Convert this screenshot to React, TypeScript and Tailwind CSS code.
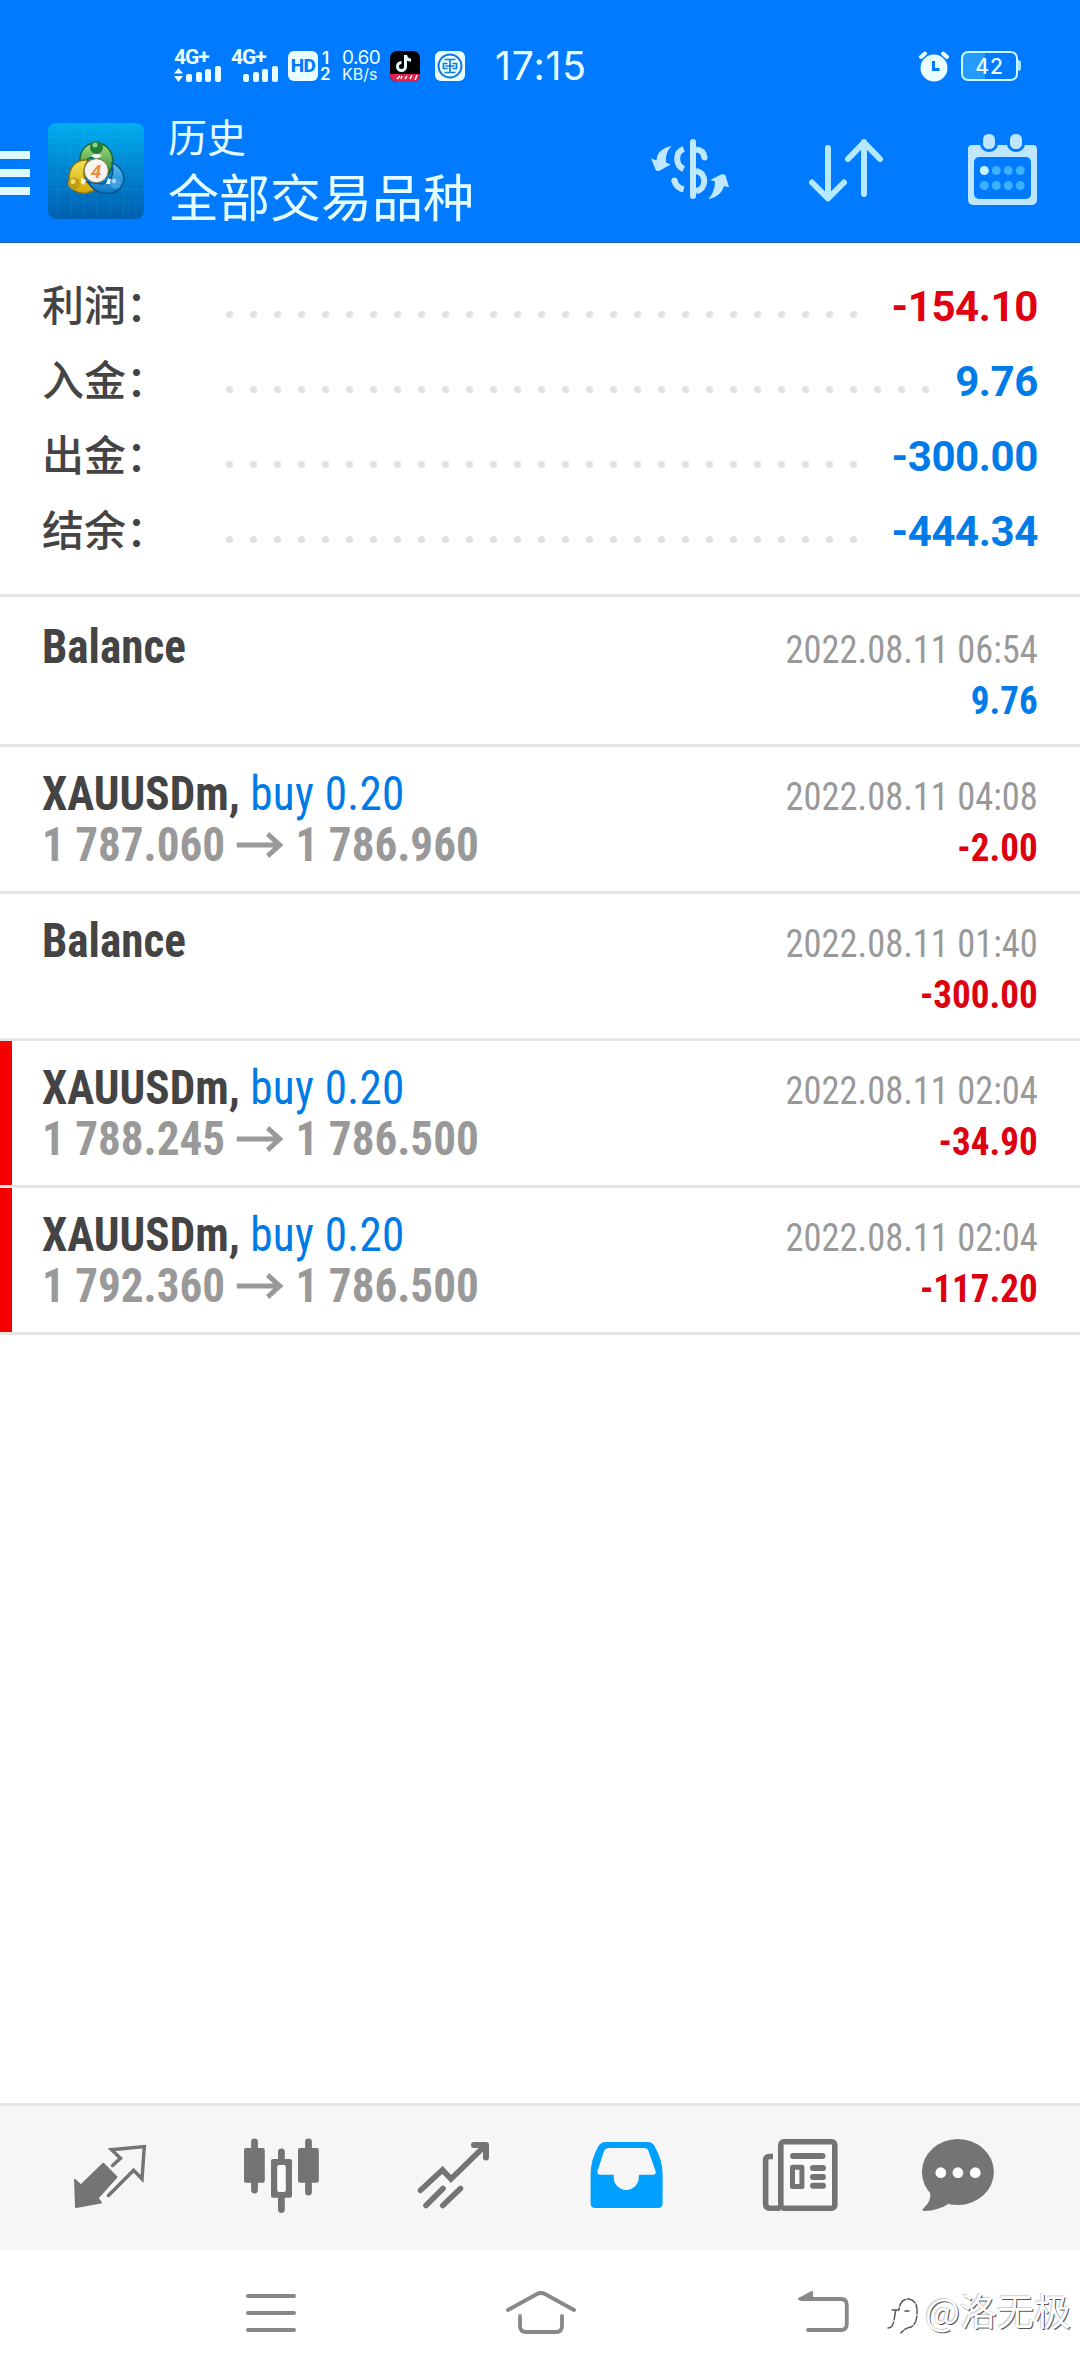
import type { ReactNode } from 'react'
import { clsx } from 'clsx'

interface SummaryRow {
  label: string
  value: string
  dots: number
  loss?: boolean
}

interface Deal {
  symbol: string
  side?: string
  open?: string
  close?: string
  time: string
  profit: string
  loss?: boolean
  flagged?: boolean
}

const summary: SummaryRow[] = [
  { label: '利润', value: '-154.10', dots: 27, loss: true },
  { label: '入金', value: '9.76', dots: 30 },
  { label: '出金', value: '-300.00', dots: 27 },
  { label: '结余', value: '-444.34', dots: 27 },
]

const deals: Deal[] = [
  { symbol: 'Balance', time: '2022.08.11 06:54', profit: '9.76' },
  { symbol: 'XAUUSDm,', side: 'buy 0.20', open: '1 787.060', close: '1 786.960', time: '2022.08.11 04:08', profit: '-2.00', loss: true },
  { symbol: 'Balance', time: '2022.08.11 01:40', profit: '-300.00', loss: true },
  { symbol: 'XAUUSDm,', side: 'buy 0.20', open: '1 788.245', close: '1 786.500', time: '2022.08.11 02:04', profit: '-34.90', loss: true, flagged: true },
  { symbol: 'XAUUSDm,', side: 'buy 0.20', open: '1 792.360', close: '1 786.500', time: '2022.08.11 02:04', profit: '-117.20', loss: true, flagged: true },
]

function Signal({ arrows }: { arrows?: boolean }) {
  return (
    <div className="w-[57px]">
      <div className="h-[18px] font-['Roboto',sans-serif] text-[21px] leading-[18px] font-bold tracking-[-1px] whitespace-nowrap">4G+</div>
      <svg className="block" width="50" height="17" viewBox="0 0 50 17" fill="#eaffff">
        {arrows && <path d="M4.5 2L9 7.5H0zM4.5 16L0 10H9z" />}
        <rect x="12" y="8" width="6" height="8" rx="2" />
        <rect x="22" y="6" width="6" height="10" rx="2" />
        <rect x="31" y="3" width="6" height="13" rx="2" />
        <rect x="41" y="0" width="6" height="16" rx="2" />
      </svg>
    </div>
  )
}

function StatusBar() {
  return (
    <div className="flex h-[101px] items-start pt-[48px] pl-[174px] pr-[59px] font-['Inter','Roboto',sans-serif] text-[#eaffff]">
      <Signal arrows />
      <Signal />
      <div className="mt-[3px] flex h-[30px] w-[30px] items-center justify-center rounded-[6px] bg-[#eaffff] font-['Roboto',sans-serif] text-[19px] font-extrabold tracking-[-0.5px] text-[#007bff]">HD</div>
      <div className="mt-[2px] ml-[2px] w-[22px] text-[17px] leading-[16px] font-semibold">
        <div className="pl-[2px]">1</div>
        <div>2</div>
      </div>
      <div className="mt-[1px] w-[48px] text-[19px] leading-[17px] tracking-[-0.5px]">
        <div>0.60</div>
        <div className="text-[16px] tracking-normal">KB/s</div>
      </div>
      <svg className="mt-[3px]" width="30" height="31" viewBox="0 0 30 31">
        <rect width="30" height="31" rx="7" fill="#000" />
        <path d="M0 23H30V24a7 7 0 0 1-7 7H7a7 7 0 0 1-7-7z" fill="#e0224e" />
        <path d="M15.5 4v11.5a4 4 0 1 1-4-4M15.5 4c.5 3.5 2.5 5 5.5 5.2" fill="none" stroke="#eaffff" strokeWidth="3" />
        <path d="M7 28l3-3M11 28l1-3M15 28l2-3M20 28l2-4M25 29l2-5" stroke="#fff" strokeWidth="1.5" />
      </svg>
      <svg className="mt-[3px] ml-[15px]" width="30" height="30" viewBox="0 0 30 30" fill="none" stroke="#1478dc">
        <rect width="30" height="30" rx="6" fill="#eaffff" stroke="none" />
        <circle cx="15" cy="15" r="11.5" strokeWidth="2" />
        <path d="M9.5 8.500H20.500M9.500 21.500H20.500M15 8.500V21.500M12.500 12.500H8.500V17.500H12.500M17.500 12.500H21.500V17.500H17.500M10.500 15H19.500" strokeWidth="1.700" />
      </svg>
      <div className="ml-[30px] text-[39px] leading-[36px] tracking-[0.9px]">17:15</div>
      <svg className="mt-[3px] ml-auto" width="32" height="31" viewBox="0 0 32 31">
        <circle cx="16" cy="17" r="13.5" fill="#eaffff" />
        <path d="M3 6l4-3.5M29 6l-4-3.5" stroke="#eaffff" strokeWidth="4" strokeLinecap="round" />
        <path d="M15.5 10v8.5h6" fill="none" stroke="#007bff" strokeWidth="3" />
      </svg>
      <div className="mt-[3px] ml-[11px] flex h-[30px] w-[57px] items-center justify-center rounded-[7px] border-2 border-[#c9f7ff] bg-linear-to-r from-[#259bff] from-42% to-[#007bff] to-42% text-[21px] leading-none font-medium tracking-[1px]">42</div>
      <div className="mt-[12px] h-[11px] w-[3px] rounded-r-sm bg-[#9fe6ff]" />
    </div>
  )
}

function AppLogo() {
  return (
    <svg width="96" height="96" viewBox="0 0 96 96">
      <defs>
        <linearGradient id="tile" x1="0" y1="0" x2="0" y2="1">
          <stop offset="0" stopColor="#00aef0" />
          <stop offset="0.5" stopColor="#0083cf" />
          <stop offset="1" stopColor="#005fae" />
        </linearGradient>
        <linearGradient id="green" x1="0" y1="0" x2="0" y2="1">
          <stop offset="0" stopColor="#a8dc86" />
          <stop offset="1" stopColor="#2c8a2c" />
        </linearGradient>
        <linearGradient id="yellow" x1="0" y1="0" x2="0" y2="1">
          <stop offset="0" stopColor="#f5e35a" />
          <stop offset="1" stopColor="#d6a800" />
        </linearGradient>
        <linearGradient id="blue" x1="0" y1="0" x2="0" y2="1">
          <stop offset="0" stopColor="#5cc4f2" />
          <stop offset="1" stopColor="#0b74c4" />
        </linearGradient>
      </defs>
      <rect width="96" height="96" rx="8" fill="url(#tile)" />
      <path d="M10 0V96M23 0V96M36 0V96M49 0V96M62 0V96M75 0V96M88 0V96M0 14H96M0 27H96M0 40H96M0 53H96M0 66H96M0 79H96" stroke="#4cc3ff" strokeOpacity="0.12" />
      <path d="M32 39C31 28 38 20 48 20S66 28 65 43L60 51L55 40C50 33 42 33 37 38Z" fill="url(#green)" stroke="#14682a" strokeWidth="1.5" />
      <path d="M40 37C27 36 21 45 21 56S30 71 39 70L47 67L38 58C34 50 36 43 40 37Z" fill="url(#yellow)" stroke="#8c7411" strokeWidth="1.5" />
      <path d="M64 40C73 43 78 53 75 61S64 71 55 70C48 69 43 64 40 59L54 61C64 59 66 50 64 40Z" fill="url(#blue)" stroke="#0a5394" strokeWidth="1.5" />
      <path d="M43 33L48.500 36L54 33L51 31H46ZM33 55L38 57L36 62L33 60ZM58 61L60 55L64 57L62 61Z" fill="#e8f4f0" />
      <circle cx="48.5" cy="24.5" r="6.5" fill="#237d36" />
      <circle cx="47" cy="22" r="2.5" fill="#8fd08c" />
      <circle cx="26" cy="60.5" r="6" fill="#c29a14" />
      <circle cx="25" cy="58.5" r="2.5" fill="#f0d968" />
      <circle cx="67.5" cy="60" r="5.5" fill="#3f9fe0" />
      <circle cx="66" cy="58" r="2.2" fill="#a4dcfa" />
      <circle cx="48.3" cy="47.7" r="12" fill="#f7f3ee" stroke="#7a6a3a" strokeWidth="0.8" />
      <text x="48" y="54.5" textAnchor="middle" fontSize="19" fontWeight="700" fontStyle="italic" fill="#f08a3c" fontFamily="Roboto, sans-serif">4</text>
    </svg>
  )
}

function HeaderIcon({ children }: { children: ReactNode }) {
  return (
    <div className="flex w-[156px] justify-center">
      <svg width="96" height="96" viewBox="0 0 96 96" fill="none" strokeLinecap="round" strokeLinejoin="round">
        {children}
      </svg>
    </div>
  )
}

function Header() {
  return (
    <div className="flex h-[142px] items-start border-b border-[#1463b4] pt-[20px]">
      <div className="mt-[30px] flex flex-col gap-[10px]">
        <div className="h-2 w-[30px] bg-[#dffaff]" />
        <div className="h-2 w-[30px] bg-[#dffaff]" />
        <div className="h-2 w-[30px] bg-[#dffaff]" />
      </div>
      <div className="mt-[2px] ml-[18px]">
        <AppLogo />
      </div>
      <div className="mt-[-9px] ml-[24px] flex-1 font-['Noto_Sans_CJK_SC',sans-serif] whitespace-nowrap text-[#e6fdff]">
        <div className="text-[39px] leading-[46px]">历史</div>
        <div className="mt-[7px] text-[51px] leading-[60px]">全部交易品种</div>
      </div>
      <HeaderIcon>
        <g stroke="#bfe8ff" strokeWidth="6" strokeLinecap="butt">
          <path d="M51 21V75" strokeLinecap="round" />
          <path d="M41.700 28C33 31 33 44 41.700 48M54 28.500C59 29 62 32 62.300 36.500M54 50C65 52 65 68 54 70M41.700 68.500C36 67 33 63 32 58.500" />
        </g>
        <circle cx="62.5" cy="36.5" r="3" fill="#bfe8ff" />
        <circle cx="32.5" cy="59.5" r="3" fill="#bfe8ff" />
        <path d="M30 25C25 29 23.500 35 24 41.500L28.700 43.500L17 50Q14.500 50.500 13.500 48.500L9 37.300L14.500 39.500C15 31 21 26.500 30 25Z" fill="#bfe8ff" />
        <path d="M66.300 78C70.500 74 73 67 73 60.500L68.300 59L79 53.500Q82 52.500 83.500 54.500L87 66.300L82 65C80 72 74 77 66.300 78Z" fill="#bfe8ff" />
      </HeaderIcon>
      <HeaderIcon>
        <path d="M30 27V77M14 61.500L30 77.500L46 61.500M66 73V21M50 38L66 21.500L82 38" stroke="#b4e9ff" strokeWidth="6" />
      </HeaderIcon>
      <HeaderIcon>
        <path d="M18 24H79a4 4 0 0 1 4 4V79a5 5 0 0 1-5 5H19a5 5 0 0 1-5-5V28a4 4 0 0 1 4-4ZM25 36a5 5 0 0 0-5 5V73a5 5 0 0 0 5 5H72a5 5 0 0 0 5-5V41a5 5 0 0 0-5-5Z" fill="#bfe6ff" fillRule="evenodd" />
        <rect x="27.5" y="11.5" width="15" height="18" rx="7" fill="#bfe6ff" stroke="#007bff" strokeWidth="3" />
        <rect x="54.5" y="11.5" width="15" height="18" rx="7" fill="#bfe6ff" stroke="#007bff" strokeWidth="3" />
        {[49.5, 64.5].map((y) =>
          [30.3, 42.3, 54.3, 66.3].map((x) => (
            <circle key={`${x}-${y}`} cx={x} cy={y} r="4.5" fill={x < 40 && y < 60 ? '#c8f4ff' : '#3db0ff'} />
          )),
        )}
      </HeaderIcon>
    </div>
  )
}

function Summary() {
  return (
    <div className="h-[354px] border-b-[3px] border-[#e5e5e5] pt-[26px]">
      {summary.map((row) => (
        <div key={row.label} className="flex h-[75px] items-center pr-[42px] pl-[42px]">
          <div className="mb-2 w-[184px] font-['Noto_Sans_CJK_SC',sans-serif] text-[42px] leading-[60px] font-medium text-[#444]">{row.label}：</div>
          <div className="mt-[15px] flex gap-[17px]">
            {Array.from({ length: row.dots }, (_, i) => (
              <span key={i} className="size-[7px] rounded-full bg-[#e2e2e2]" />
            ))}
          </div>
          <div className={clsx("ml-auto font-['Roboto',sans-serif] text-[42px] leading-[60px] font-bold tracking-[-0.4px]", row.loss ? 'text-[#e0000f]' : 'text-[#007be8]')}>
            {row.value}
          </div>
        </div>
      ))}
    </div>
  )
}

function DealRow({ deal }: { deal: Deal }) {
  return (
    <div className="flex h-[147px] border-b-[3px] border-[#e5e5e5]">
      <div className={clsx('w-3 shrink-0', deal.flagged && 'bg-[#f60000]')} />
      <div className="flex flex-1 justify-between pt-[21px] pr-[42px] pl-[30px] font-['Roboto_Condensed','Roboto',sans-serif] whitespace-nowrap [font-stretch:75%]">
        <div className="origin-left scale-x-[0.94] text-[48px] leading-[51px]">
          <div>
            <span className="font-bold text-[#444]">{deal.symbol}</span>
            {deal.side && <span className="tracking-[0.3px] text-[#007be5]"> {deal.side}</span>}
          </div>
          {deal.open && (
            <div className="flex items-center font-bold text-[#999]">
              {deal.open}
              <svg className="mr-[13px] ml-[12px]" width="50" height="26" viewBox="0 0 50 26" fill="none" stroke="#999" strokeWidth="5">
                <path d="M0 13H46M33 2L46 13L33 24" />
              </svg>
              {deal.close}
            </div>
          )}
        </div>
        <div className="pt-[4px] text-right text-[39px] leading-[51px]">
          <div className="origin-right scale-x-[0.935] text-[#999]">{deal.time}</div>
          <div className={clsx('origin-right scale-x-[0.95] font-bold', deal.loss ? 'text-[#dc0010]' : 'text-[#007be8]')}>{deal.profit}</div>
        </div>
      </div>
    </div>
  )
}

function Tab({ children, className }: { children: ReactNode; className?: string }) {
  return (
    <div className="flex w-[172px] justify-center">
      <svg className={className} width="84" height="84" viewBox="0 0 84 84" fill="#747474" strokeLinecap="round" strokeLinejoin="round">
        {children}
      </svg>
    </div>
  )
}

function TabBar() {
  return (
    <div className="flex h-[147px] items-center border-t-[3px] border-[#e5e5e5] bg-[#f6f6f6] px-6">
      <Tab>
        <path d="M7 44L12.900 49.500L35.300 27.700L48.500 41L29.500 62L33 66.500L8 71Z" stroke="#747474" strokeWidth="2" />
        <path d="M44.600 29.500L52.500 22.300L43.500 13.700L76.300 10.600L74 43L65.600 34.300L40.500 59.500" fill="none" stroke="#747474" strokeWidth="3.500" strokeLinejoin="miter" />
      </Tab>
      <Tab>
        <path d="M14.500 6V54M68.500 6V56M41.400 16V73.500" stroke="#747474" strokeWidth="6.800" />
        <rect x="4" y="12" width="20.8" height="34.7" rx="2" />
        <rect x="58" y="12" width="20.8" height="34.7" rx="2" />
        <rect x="31" y="23" width="21" height="38.7" rx="2" />
        <rect x="37.2" y="29" width="8.6" height="27" rx="2" fill="#fff" />
      </Tab>
      <Tab>
        <g fill="none" stroke="#747474" strokeWidth="5.6">
          <path d="M8.500 54.300L30.500 34L39 43L73 9.700" strokeLinejoin="miter" />
          <path d="M62 9H74V21.500" strokeWidth="6" />
          <path d="M14 69.500L31 52.500M30.800 69.500L48.500 52.500" />
        </g>
      </Tab>
      <Tab>
        <path d="M22 6H64Q68 6 70.500 10Q78.600 24 78.600 38V67Q78.600 72 74 72H11Q6.600 72 6.600 67V38Q6.600 24 14.500 10Q17 6 22 6ZM25 12Q21.500 12 20 15L13.500 35Q13 38.700 16 38.700H29.700V41.500A12.500 12.500 0 0 0 54.800 41.500V38.700H69Q72.500 38.700 71.500 35L64.500 15Q63.500 12 60 12Z" fill="#00a0ff" fillRule="evenodd" />
      </Tab>
      <Tab>
        <g fill="none" stroke="#747474" strokeWidth="5.6">
          <rect x="24.8" y="5.8" width="54" height="66.4" rx="3" fill="#fafafa" />
          <path d="M17 20.500H13.500Q9.600 20.500 9.600 24.500V68Q9.600 72.200 14 72.200H24" strokeLinecap="butt" />
          <path d="M37 20H66.500M57 32H67M57 41H67M57 49.700H67" strokeWidth="6" />
          <rect x="36.5" y="31.2" width="9.4" height="19.2" strokeWidth="5" />
        </g>
      </Tab>
      <Tab className="-ml-6">
        <ellipse cx="41.9" cy="36" rx="36" ry="33" />
        <path d="M13.500 54Q17 64 7 73Q5.500 74.800 8.500 75Q22 74.500 32.400 68Z" />
        <circle cx="24.8" cy="36.7" r="5.4" fill="#fff" />
        <circle cx="41.9" cy="36.7" r="5.4" fill="#fff" />
        <circle cx="59.3" cy="36.7" r="5.4" fill="#fff" />
      </Tab>
    </div>
  )
}

function SystemNav() {
  return (
    <div className="relative flex h-[126px] gap-[170px] pl-[221px]">
      <svg width="100" height="126" viewBox="0 0 100 126" stroke="#888" strokeWidth="4" strokeLinecap="round">
        <path d="M27 46H73M27 63H73M27 80H73" />
      </svg>
      <svg width="100" height="126" viewBox="0 0 100 126" fill="none" stroke="#888" strokeWidth="3.8" strokeLinecap="round">
        <path d="M17 60L46 44Q50 42 54 44L83 60M29 66V76Q29 82 35 82H65Q71 82 71 76V66" />
      </svg>
      <svg width="100" height="126" viewBox="0 0 100 126" fill="none" stroke="#888" strokeWidth="3.8" strokeLinecap="round">
        <path d="M40 49H80Q85.800 49 85.800 55V74Q85.800 80 80 80H47" />
        <path d="M38 49L51 42V49Z" fill="#888" strokeWidth="2" strokeLinejoin="round" />
      </svg>
      <div className="absolute top-[33px] right-[9px] flex items-center font-['Noto_Sans_CJK_SC',sans-serif] text-[37px] leading-[54px] text-white [text-shadow:1px_1px_0px_#555,-1px_-1px_1px_#ccc]">
        <svg className="mt-3 mr-[3px]" width="36" height="42" viewBox="0 0 36 42" fill="none" strokeLinecap="round">
          <path d="M2 33Q7 33 8 25L10 14M6 15H13Q14 4 23 4Q32 6 31 18Q31 29 25 32Q19 33 15 38M19 16H23" stroke="#555" strokeWidth="1.5" strokeDasharray="9 2" />
        </svg>
        @洛无极
      </div>
    </div>
  )
}

export default function App() {
  return (
    <div className="flex h-[2376px] w-[1080px] flex-col overflow-hidden bg-white">
      <div className="bg-[#007bff]">
        <StatusBar />
        <Header />
      </div>
      <Summary />
      <div className="flex-1 pt-[3px]">
        {deals.map((deal, i) => (
          <DealRow key={i} deal={deal} />
        ))}
      </div>
      <TabBar />
      <SystemNav />
    </div>
  )
}
